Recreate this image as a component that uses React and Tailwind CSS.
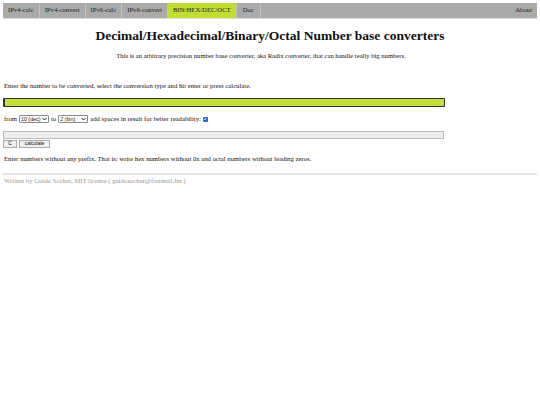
import React from "react";

const serif = { fontFamily: '"Liberation Serif", "Times New Roman", serif' };
const sans = { fontFamily: '"Liberation Sans", Arial, sans-serif' };

function Chevron() {
  return (
    <svg width="5" height="4" viewBox="0 0 10 8" className="shrink-0">
      <path d="M1 2 L5 6 L9 2" fill="none" stroke="#222" strokeWidth="2" />
    </svg>
  );
}

export default function App() {
  const navItems = ["IPv4-calc", "IPv4-convert", "IPv6-calc", "IPv6-convert"];
  return (
    <div className="w-[540px] h-[405px] bg-white text-[6.7px] text-[#111]" style={serif}>
      <div className="px-[3px] pt-[3px]">
        <div className="flex h-[16px] bg-[#aaaaaa] border-b border-[#dddddd] text-[6.7px]">
          {navItems.map((n) => (
            <div key={n} className="flex items-center px-[5px] border-r border-[#c4c4c4] text-[#222]">{n}</div>
          ))}
          <div className="flex items-center px-[5px] bg-[#c2dd32] text-[#222] border-r border-[#c4c4c4]">BIN/HEX/DEC/OCT</div>
          <div className="flex items-center px-[6px] border-r border-[#c4c4c4] text-[#222]">Doc</div>
          <div className="flex-1" />
          <div className="flex items-center px-[5px] text-[#222]">About</div>
        </div>
      </div>
      <div className="text-center font-bold text-[13.5px] mt-[9px] leading-[16px]">Decimal/Hexadecimal/Binary/Octal Number base converters</div>
      <div className="text-center mt-[8px] leading-[8px] text-[6.6px] pr-[18px]">This is an arbitrary precision number base converter, aka Radix converter, that can handle really big numbers.</div>
      <div className="px-[4px] mt-[22px] leading-[8px]">Enter the number to be converted, select the conversion type and hit enter or press calculate.</div>
      <div className="px-[3px] mt-[8px]">
        <div className="w-[442px] h-[9px] bg-[#c3e03a] border border-[#333] border-l-2 rounded-[1px]" />
      </div>
      <div className="flex items-center px-[4px] mt-[8px] gap-[2px] leading-[8px]">
        <span>from</span>
        <span className="flex items-center justify-between w-[30px] h-[8px] border border-[#888] rounded-[1px] px-[1px] text-[5.3px] bg-white" style={sans}>10 (dec)<Chevron /></span>
        <span>to</span>
        <span className="flex items-center justify-between w-[30px] h-[8px] border border-[#888] rounded-[1px] px-[1px] text-[5.3px] bg-white" style={sans}>2 (bin)<Chevron /></span>
        <span>add spaces in result for better readability:</span>
        <span className="w-[5px] h-[5px] bg-[#1f6fd6] rounded-[1px] flex items-center justify-center">
          <svg width="4" height="4" viewBox="0 0 10 10"><path d="M2 5 L4 7.5 L8 2.5" fill="none" stroke="#fff" strokeWidth="2" /></svg>
        </span>
      </div>
      <div className="px-[3px] mt-[8px]">
        <div className="w-[441px] h-[8px] bg-[#eeeeee] border border-[#bbbbbb]" />
      </div>
      <div className="flex px-[3px] gap-[2px] mt-[1px]" style={sans}>
        <div className="h-[8px] w-[14px] flex items-center justify-center border border-[#aaa] bg-[#efefef] text-[5px]">C</div>
        <div className="h-[8px] w-[31px] flex items-center justify-center border border-[#aaa] bg-[#efefef] text-[5px]">calculate</div>
      </div>
      <div className="px-[4px] mt-[7px] leading-[8px]">Enter numbers without any prefix. That is: write hex numbers without 0x and octal numbers without leading zeros.</div>
      <div className="px-[3px] mt-[10px]">
        <div className="h-[2px] bg-[#e4e4e4]" />
      </div>
      <div className="px-[4px] mt-[2px] leading-[8px] text-[#999]">Written by Guido Socher, MIT license ( guidosocher@fastmail.fm )</div>
    </div>
  );
}
